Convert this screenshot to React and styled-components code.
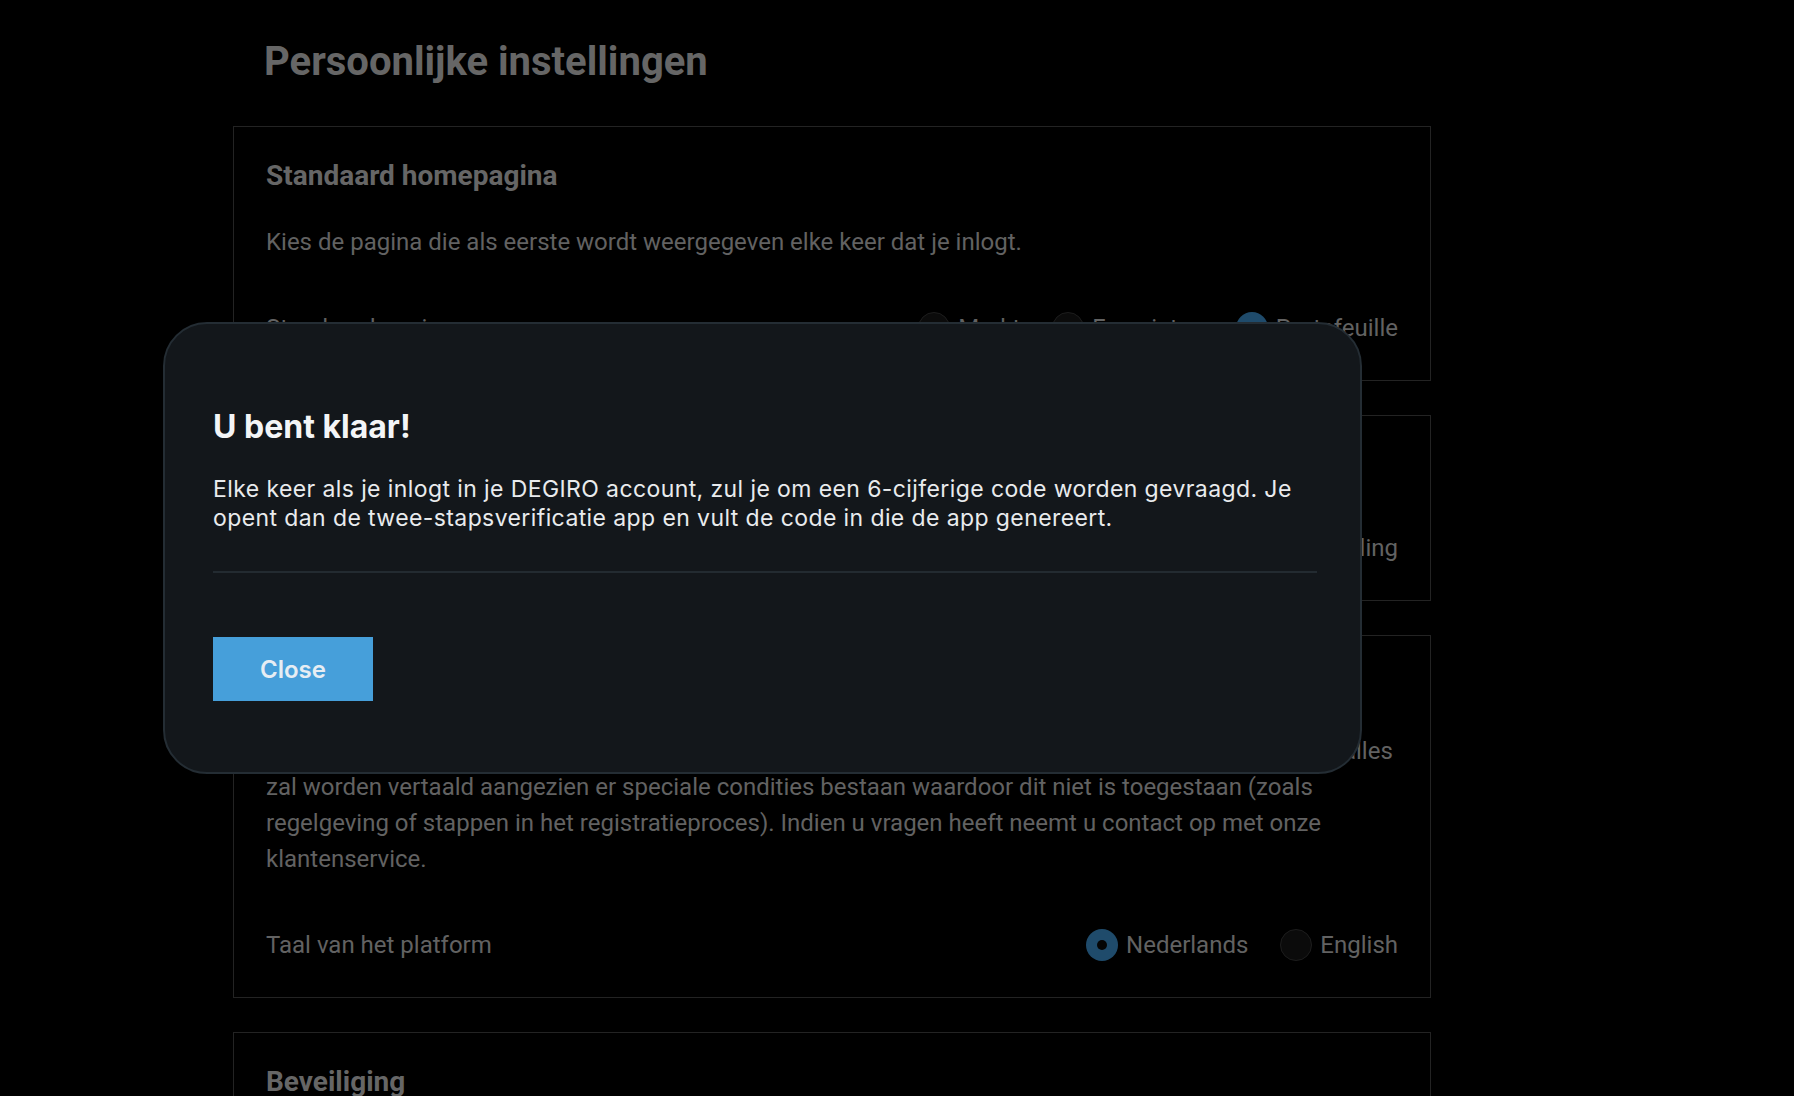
import React from "react";
import styled, { createGlobalStyle } from "styled-components";

const GlobalStyle = createGlobalStyle`
    html, body {
        margin: 0;
        background: #000;
        overflow: hidden;
    }
    body {
        font-family: Roboto, "Liberation Sans", sans-serif;
    }
    * {
        box-sizing: border-box;
    }
`

const Page = styled.div`
    width: 1198px;
    margin-left: 233px;
    padding-top: 38px;
`

const PageTitle = styled.h1`
    margin: 0 0 40px;
    padding-left: 31px;
    font-size: 40px;
    line-height: 48px;
    font-weight: 700;
    color: #666;
`

const Cards = styled.div`
    display: flex;
    flex-direction: column;
    gap: 34px;
`

const Card = styled.section`
    border: 1px solid #232323;
    padding: 32px;
`

const CardTitle = styled.h2`
    margin: 0 0 31px;
    font-size: 28px;
    line-height: 34px;
    font-weight: 700;
    color: #666;
`

const Text = styled.p`
    margin: 0;
    font-size: 24px;
    line-height: 36px;
    color: #626262;
`

const Row = styled.div`
    display: flex;
    align-items: center;
    justify-content: space-between;
    height: 40px;
    margin-top: ${({ $tight }) => ($tight ? "46px" : "48px")};
`

const Label = styled.span`
    font-size: 24px;
    color: #626262;
`

const Options = styled.div`
    display: flex;
    align-items: center;
    gap: 32px;
`

const Option = styled.label`
    display: flex;
    align-items: center;
    gap: 8px;
    font-size: 24px;
    color: #626262;
`

const Dot = styled.span`
    position: relative;
    width: 32px;
    height: 32px;
    border-radius: 50%;
    background: ${({ $on }) => ($on ? "#1f4b6b" : "#0b0b0b")};
    border: ${({ $on }) => ($on ? "none" : "1.5px solid #1d1d1d")};
    &::after {
        content: "";
        display: ${({ $on }) => ($on ? "block" : "none")};
        position: absolute;
        left: 11px;
        top: 11px;
        width: 10px;
        height: 10px;
        border-radius: 50%;
        background: #050505;
    }
`

const Overlay = styled.div`
    position: fixed;
    inset: 0;
    display: flex;
    align-items: center;
    padding-left: 163px;
`

const Modal = styled.div`
    width: 1199px;
    padding: 84px 43px 71px 48px;
    background: #13171b;
    border: 2px solid #242d34;
    border-radius: 44px;
    font-family: Inter, "Noto Sans", sans-serif;
`

const ModalTitle = styled.h3`
    margin: 0;
    font-size: 32px;
    line-height: 38px;
    font-weight: 700;
    color: #f3f5f7;
`

const ModalText = styled.p`
    margin: 29px 0 0;
    font-size: 23px;
    line-height: 28.6px;
    letter-spacing: 0.4px;
    color: #e9ebed;
`

const Divider = styled.hr`
    margin: 39px 0 0;
    border: none;
    height: 2px;
    background: #232b31;
`

const CloseButton = styled.button`
    display: block;
    margin-top: 64px;
    width: 160px;
    height: 64px;
    border: none;
    background: #469fda;
    color: #e6edf3;
    font-family: Inter, "Noto Sans", sans-serif;
    font-size: 24px;
    font-weight: 600;
`

function RadioRow({ label, options, value, tight }) {
    return (
        <Row $tight={tight}>
            <Label>{label}</Label>
            <Options>
                {options.map((o) => (
                    <Option key={o}>
                        <Dot $on={o === value} />
                        {o}
                    </Option>
                ))}
            </Options>
        </Row>
    )
}

export default function App() {
    return (
        <>
            <GlobalStyle />
            <Page>
                <PageTitle>Persoonlijke instellingen</PageTitle>
                <Cards>
                    <Card>
                        <CardTitle>Standaard homepagina</CardTitle>
                        <Text>Kies de pagina die als eerste wordt weergegeven elke keer dat je inlogt.</Text>
                        <RadioRow
                            label="Standaard pagina"
                            options={["Markt", "Favorieten", "Portefeuille"]}
                            value="Portefeuille"
                        />
                    </Card>
                    <Card>
                        <CardTitle>Orderscherm</CardTitle>
                        <RadioRow
                            tight
                            label="Standaard weergave"
                            options={["Eenvoudig", "Uitgebreide instelling"]}
                            value="Eenvoudig"
                        />
                    </Card>
                    <Card>
                        <CardTitle>Taal</CardTitle>
                        <Text>
                            Bepaalde onderdelen van dit platform zijn alleen in het Engels beschikbaar. Het is mogelijk dat er niet alles
                            zal worden vertaald aangezien er speciale condities bestaan waardoor dit niet is toegestaan (zoals
                            regelgeving of stappen in het registratieproces). Indien u vragen heeft neemt u contact op met onze
                            klantenservice.
                        </Text>
                        <RadioRow
                            label="Taal van het platform"
                            options={["Nederlands", "English"]}
                            value="Nederlands"
                        />
                    </Card>
                    <Card>
                        <CardTitle>Beveiliging</CardTitle>
                        <Text>Beveilig je account met twee-stapsverificatie.</Text>
                        <RadioRow
                            label="Twee-stapsverificatie"
                            options={["Aan", "Uit"]}
                            value="Aan"
                        />
                    </Card>
                </Cards>
            </Page>
            <Overlay>
                <Modal>
                    <ModalTitle>U bent klaar!</ModalTitle>
                    <ModalText>
                        Elke keer als je inlogt in je DEGIRO account, zul je om een 6-cijferige code worden gevraagd. Je
                        opent dan de twee-stapsverificatie app en vult de code in die de app genereert.
                    </ModalText>
                    <Divider />
                    <CloseButton>Close</CloseButton>
                </Modal>
            </Overlay>
        </>
    )
}
